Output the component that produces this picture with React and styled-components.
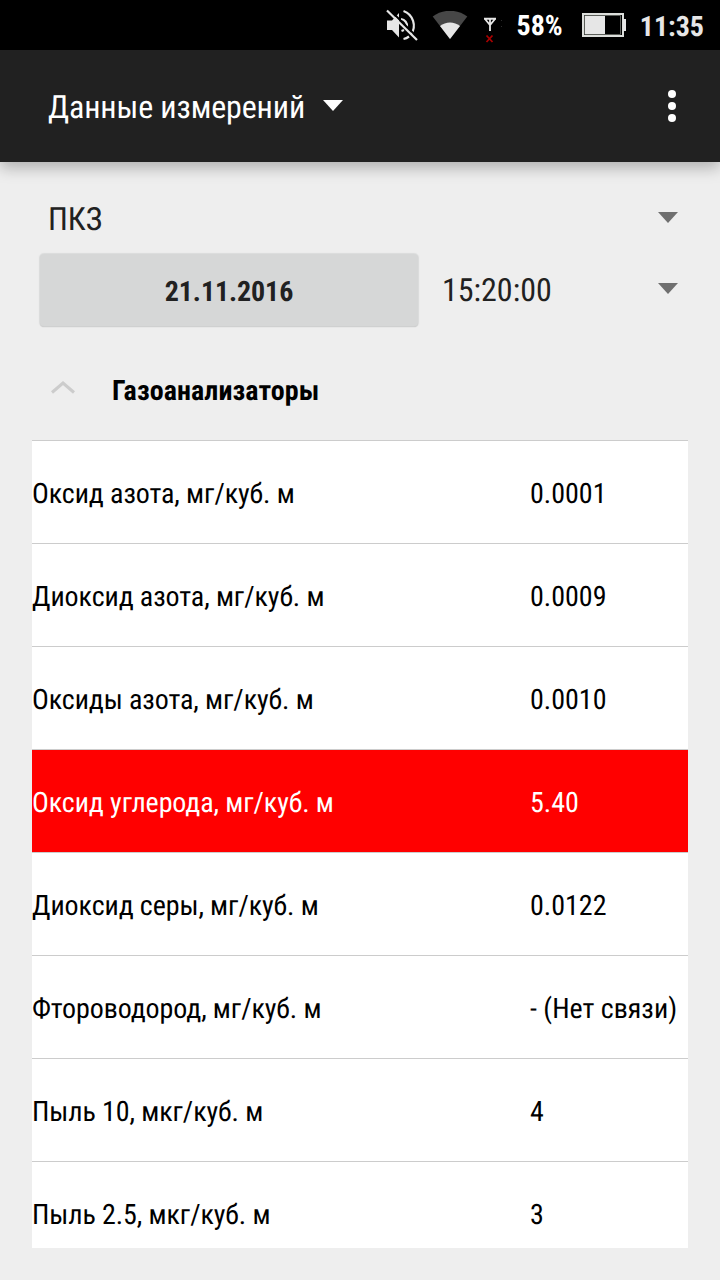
import React from "react";
import styled, { createGlobalStyle, css } from "styled-components";

const rows = [
  { name: "Оксид азота, мг/куб. м", value: "0.0001" },
  { name: "Диоксид азота, мг/куб. м", value: "0.0009" },
  { name: "Оксиды азота, мг/куб. м", value: "0.0010" },
  { name: "Оксид углерода, мг/куб. м", value: "5.40", alarm: true },
  { name: "Диоксид серы, мг/куб. м", value: "0.0122" },
  { name: "Фтороводород, мг/куб. м", value: "- (Нет связи)" },
  { name: "Пыль 10, мкг/куб. м", value: "4" },
  { name: "Пыль 2.5, мкг/куб. м", value: "3" },
];

const MutedIcon = () => (
  <svg width="32" height="32" viewBox="0 0 32 32" fill="none">
    <path d="M1 11.500h5L13 4v24.500L6 21H1z" fill="#e6e6e6" />
    <path d="M15 10a7 7 0 0 1 6 8M15.500 22l2.500-1" stroke="#e6e6e6" strokeWidth="2.200" />
    <path
      d="M17.500 2A15.500 15.500 0 0 1 25 25.500M23 27.500a14 14 0 0 1-5.500 2.500"
      stroke="#e6e6e6"
      strokeWidth="2.200"
    />
    <path d="M3.500 .5l28 28" stroke="#000" strokeWidth="2" />
    <path d="M1 1.500l30 29.500" stroke="#e6e6e6" strokeWidth="2.200" />
  </svg>
);

const WifiIcon = () => (
  <svg width="36" height="28" viewBox="0 0 36 28">
    <path d="M18 28L.700 5.500a29 29 0 0 1 34.600 0z" fill="#474747" />
    <path d="M18 28L8 15a16 16 0 0 1 20 0z" fill="#e6e6e6" />
  </svg>
);

const NoSignalIcon = () => (
  <svg width="20" height="26" viewBox="0 0 20 26" fill="none">
    <path d="M1 1.750h12M2 2l5 6 5-6M7 1v13" stroke="#e6e6e6" strokeWidth="1.800" />
    <path d="M3.500 18.500l6 6.500M9.500 18.500l-6 6.500" stroke="#a80000" strokeWidth="1.800" />
    <path d="M18 3h1v1h-1zM18 9h1v1h-1z" fill="#2c2c2c" />
  </svg>
);

const BatteryIcon = () => (
  <svg width="44" height="24" viewBox="0 0 44 24">
    <path d="M1 1h40v22H1z" fill="none" stroke="#dcdedb" strokeWidth="2" />
    <path d="M2.500 2.500h36v19h-36z" fill="none" stroke="#5b5e59" />
    <path d="M3 3h20v18H3z" fill="#e6e6e6" />
    <path d="M41 6h3v12h-3z" fill="#e6e6e6" />
  </svg>
);

const App = () => {
  return (
    <>
      <GlobalStyle />
      <Screen>
        <StatusBar>
          <MutedIcon />
          <WifiIcon />
          <Signal>
            <NoSignalIcon />
          </Signal>
          <Percent>58%</Percent>
          <BatteryIcon />
          <StatusText>11:35</StatusText>
        </StatusBar>
        <Toolbar>
          <Title>Данные измерений</Title>
          <Arrow color="#fff" />
          <Menu>
            <Dot />
            <Dot />
            <Dot />
          </Menu>
        </Toolbar>
        <Content>
          <PostRow>
            <Spinner>
              <span>ПКЗ</span>
              <Arrow color="#6f6f6f" />
            </Spinner>
          </PostRow>
          <DateRow>
            <DateButton>21.11.2016</DateButton>
            <Spinner>
              <span>15:20:00</span>
              <Arrow color="#6f6f6f" />
            </Spinner>
          </DateRow>
          <GroupHeader>
            <svg width="24" height="14" viewBox="0 0 24 14" fill="none">
              <path d="M1 11.500L12 2l11 9.500" stroke="#ccc" strokeWidth="3" />
            </svg>
            <GroupTitle>Газоанализаторы</GroupTitle>
          </GroupHeader>
          <List>
            {rows.map((row) => (
              <Row key={row.name} $alarm={row.alarm}>
                <Name>{row.name}</Name>
                <Value>{row.value}</Value>
              </Row>
            ))}
          </List>
        </Content>
      </Screen>
    </>
  );
};

const GlobalStyle = createGlobalStyle`
  * {
    box-sizing: border-box;
  }
  body {
    margin: 0;
    font-family: "Roboto Condensed", Roboto, sans-serif;
    font-stretch: condensed;
    text-rendering: geometricPrecision;
    background: #eee;
  }
  svg {
    flex-shrink: 0;
  }
`;

const Screen = styled.div`
  width: 720px;
  height: 1280px;
  display: flex;
  flex-direction: column;
  overflow: hidden;
`;

const StatusBar = styled.div`
  height: 50px;
  display: flex;
  align-items: center;
  justify-content: flex-end;
  gap: 14px;
  padding-right: 16px;
  background: #000;
`;

const Signal = styled.div`
  display: flex;
  padding-top: 10px;
  margin-left: 1px;
`;

const StatusText = styled.span`
  padding-top: 2px;
  color: #e6e6e6;
  font-size: 28px;
  font-weight: 700;
`;

const Percent = styled(StatusText)`
  padding-top: 0;
  margin-right: 5px;
  color: #fff;
`;

const Toolbar = styled.div`
  height: 112px;
  display: flex;
  align-items: center;
  padding: 0 44px 0 48px;
  background: #212121;
  box-shadow: 0 6px 14px rgba(0, 0, 0, 0.26);
`;

const Title = styled.div`
  margin-right: 18px;
  padding-top: 1px;
  color: #fff;
  font-size: 32px;
  letter-spacing: -0.12px;
`;

const Arrow = styled.i`
  margin-bottom: 2px;
  border: 10px solid transparent;
  border-top: 11px solid ${(props) => props.color};
  border-bottom: 0;
`;

const Menu = styled.div`
  display: flex;
  flex-direction: column;
  gap: 4px;
  margin-left: auto;
`;

const Dot = styled.i`
  width: 8px;
  height: 8px;
  border-radius: 50%;
  background: #fff;
`;

const Content = styled.div`
  flex: 1;
  min-height: 0;
  display: flex;
  flex-direction: column;
  padding: 32px;
`;

const Spinner = styled.div`
  flex: 1;
  display: flex;
  align-items: center;
  justify-content: space-between;
  padding: 0 10px 0 16px;
  color: #212121;
  font-size: 32px;
`;

const PostRow = styled.div`
  display: flex;
  height: 54px;
  padding-bottom: 5px;
`;

const DateRow = styled.div`
  display: flex;
  height: 84px;
  padding-bottom: 1px;
`;

const DateButton = styled.div`
  width: 378px;
  height: 72px;
  margin: 6px 8px;
  line-height: 75px;
  border-radius: 4px;
  background: #d6d7d7;
  box-shadow: 0 0 1px 1px rgba(214, 215, 215, 0.8), 0 1px 1px rgba(0, 0, 0, 0.22);
  color: #212121;
  text-align: center;
  font-size: 28px;
  font-weight: 700;
  letter-spacing: -0.1px;
`;

const GroupHeader = styled.div`
  display: flex;
  align-items: center;
  height: 108px;
  padding: 3px 0 0 19px;
`;

const GroupTitle = styled.div`
  margin-left: 37px;
  padding-top: 5px;
  font-size: 28px;
  font-weight: 700;
  letter-spacing: 0.1px;
`;

const List = styled.div`
  height: 808px;
  overflow: hidden;
  background: #fff;
`;

const Row = styled.div`
  display: flex;
  height: 103px;
  border-top: 1px solid #ccc;
  line-height: 106px;
  font-size: 28px;
  ${(props) =>
    props.$alarm &&
    css`
      background: #f00;
      color: #fff;
    `}
`;

const Name = styled.div`
  width: 498px;
  letter-spacing: -0.1px;
`;

const Value = styled.div`
  white-space: nowrap;
`;

export default App;
